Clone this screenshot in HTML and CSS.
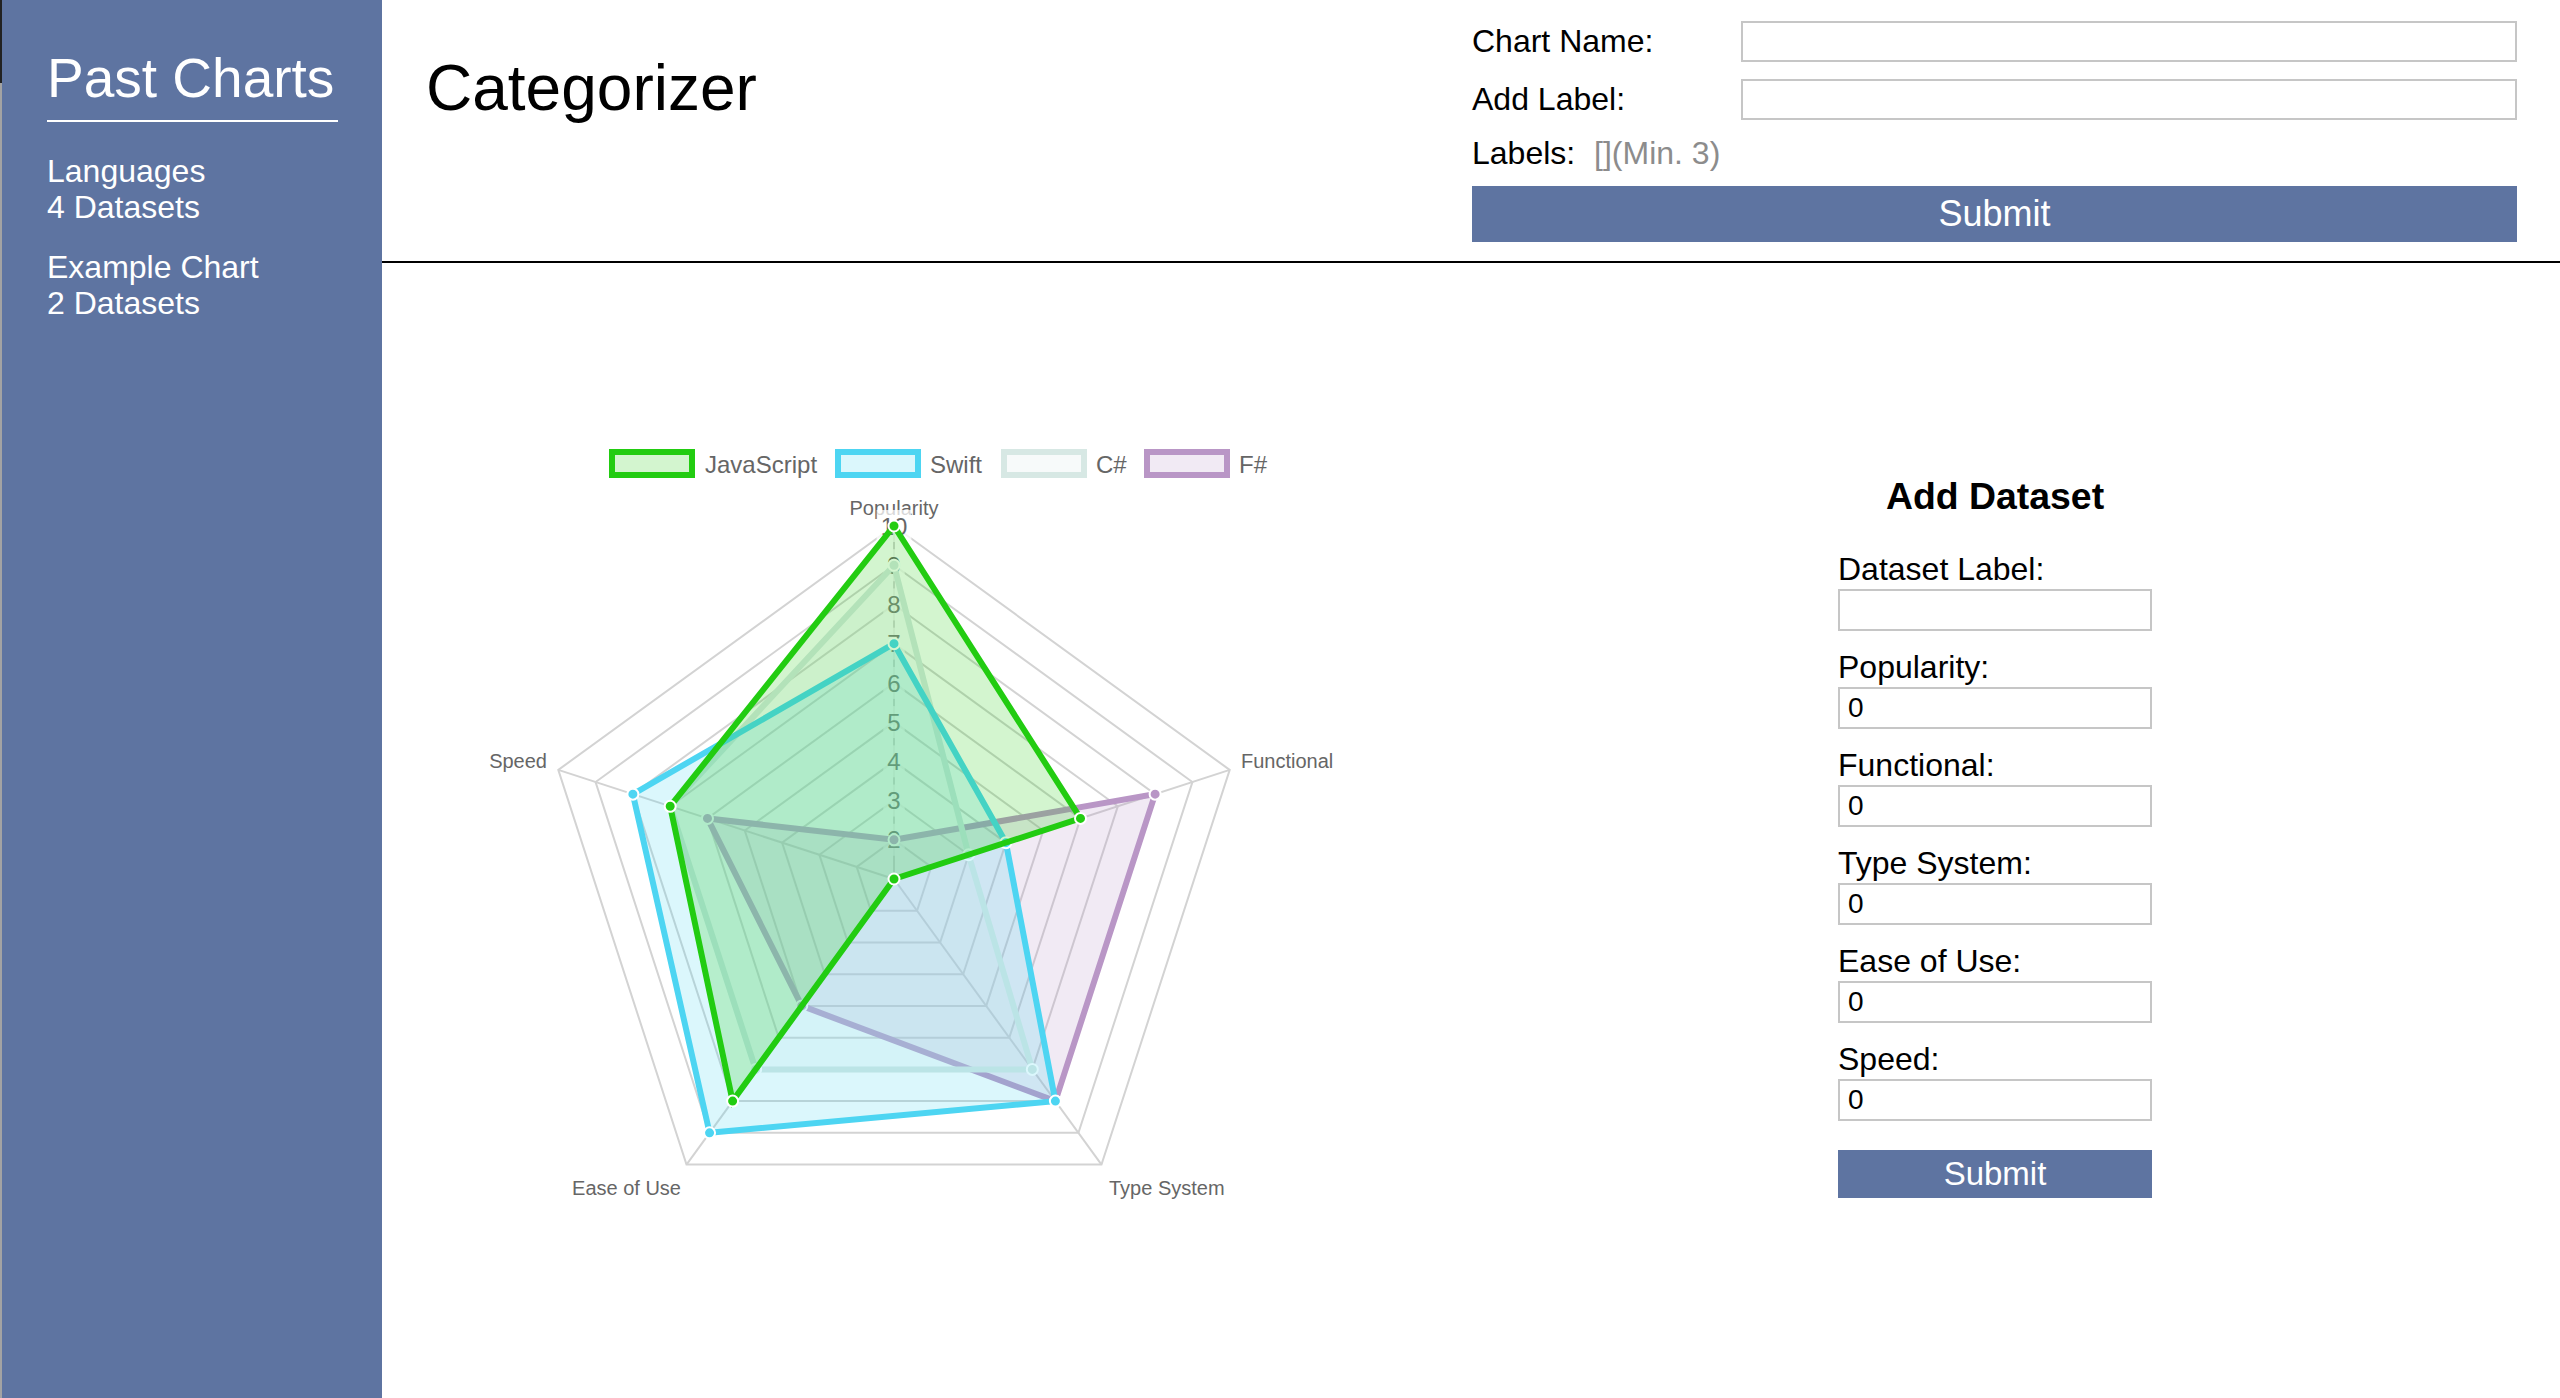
FILE: index.html
```html
<!DOCTYPE html>
<html lang="en">
<head>
<meta charset="utf-8">
<title>Categorizer</title>
<link rel="stylesheet" href="styles.css">
</head>
<body>
<div class="app">
  <aside class="sidebar">
    <h2 class="sidebar-title">Past Charts</h2>
    <ul class="chart-list">
      <li class="chart-item"><div>Languages</div><div>4 Datasets</div></li>
      <li class="chart-item"><div>Example Chart</div><div>2 Datasets</div></li>
    </ul>
  </aside>
  <main class="main">
    <header class="header">
      <h1 class="title">Categorizer</h1>
      <form class="new-chart">
        <label class="field-label">Chart Name:</label>
        <input class="text-input" type="text">
        <label class="field-label">Add Label:</label>
        <input class="text-input" type="text">
        <div class="labels-row">Labels: <span class="labels-hint">[](Min. 3)</span></div>
        <button class="btn btn-wide" type="button">Submit</button>
      </form>
    </header>
    <section class="content">
      <svg class="radar" viewBox="460 420 900 820" xmlns="http://www.w3.org/2000/svg">
        <!-- legend -->
        <g class="legend">
          <rect x="612" y="452" width="80" height="23" fill="rgba(34,204,17,0.2)" stroke="#22cc11" stroke-width="6"/>
          <text x="705" y="473">JavaScript</text>
          <rect x="838" y="452" width="80" height="23" fill="rgba(77,213,242,0.2)" stroke="#4dd5f2" stroke-width="6"/>
          <text x="930" y="473">Swift</text>
          <rect x="1004" y="452" width="80" height="23" fill="rgba(215,232,228,0.2)" stroke="#d7e8e4" stroke-width="6"/>
          <text x="1096" y="473">C#</text>
          <rect x="1147" y="452" width="80" height="23" fill="rgba(185,150,198,0.2)" stroke="#b996c6" stroke-width="6"/>
          <text x="1239" y="473">F#</text>
        </g>
        <!-- point labels -->
        <g class="point-labels">
          <text x="894" y="515" text-anchor="middle">Popularity</text>
          <text x="1241" y="768">Functional</text>
          <text x="1109" y="1195">Type System</text>
          <text x="681" y="1195" text-anchor="end">Ease of Use</text>
          <text x="547" y="768" text-anchor="end">Speed</text>
        </g>
        <g transform="translate(894 879)">
          <!-- grid rings -->
          <g fill="none" stroke="#d3d3d3" stroke-width="2">
            <polygon points="0,-39.22 37.30,-12.12 23.05,31.73 -23.05,31.73 -37.30,-12.12"/>
            <polygon points="0,-78.44 74.60,-24.24 46.11,63.46 -46.11,63.46 -74.60,-24.24"/>
            <polygon points="0,-117.67 111.91,-36.36 69.16,95.19 -69.16,95.19 -111.91,-36.36"/>
            <polygon points="0,-156.89 149.21,-48.48 92.22,126.93 -92.22,126.93 -149.21,-48.48"/>
            <polygon points="0,-196.11 186.51,-60.60 115.27,158.66 -115.27,158.66 -186.51,-60.60"/>
            <polygon points="0,-235.33 223.81,-72.72 138.32,190.39 -138.32,190.39 -223.81,-72.72"/>
            <polygon points="0,-274.56 261.12,-84.84 161.38,222.12 -161.38,222.12 -261.12,-84.84"/>
            <polygon points="0,-313.78 298.42,-96.96 184.44,253.85 -184.44,253.85 -298.42,-96.96"/>
            <polygon points="0,-353 335.72,-109.08 207.49,285.58 -207.49,285.58 -335.72,-109.08"/>
            <line x1="0" y1="0" x2="0" y2="-353"/>
            <line x1="0" y1="0" x2="335.72" y2="-109.08"/>
            <line x1="0" y1="0" x2="207.49" y2="285.58"/>
            <line x1="0" y1="0" x2="-207.49" y2="285.58"/>
            <line x1="0" y1="0" x2="-335.72" y2="-109.08"/>
          </g>
          <!-- tick labels -->
          <g class="ticks">
            <rect x="-10.7" y="-55.22" width="21.4" height="32"/><text x="0" y="-30.6">2</text>
            <rect x="-10.7" y="-94.44" width="21.4" height="32"/><text x="0" y="-69.8">3</text>
            <rect x="-10.7" y="-133.67" width="21.4" height="32"/><text x="0" y="-109.1">4</text>
            <rect x="-10.7" y="-172.89" width="21.4" height="32"/><text x="0" y="-148.3">5</text>
            <rect x="-10.7" y="-212.11" width="21.4" height="32"/><text x="0" y="-187.5">6</text>
            <rect x="-10.7" y="-251.33" width="21.4" height="32"/><text x="0" y="-226.7">7</text>
            <rect x="-10.7" y="-290.56" width="21.4" height="32"/><text x="0" y="-266">8</text>
            <rect x="-10.7" y="-329.78" width="21.4" height="32"/><text x="0" y="-305.2">9</text>
            <rect x="-17.4" y="-369" width="34.8" height="32"/><text x="0" y="-344.4">10</text>
          </g>
          <!-- F# -->
          <g>
            <polygon points="0,-39.22 261.12,-84.84 161.38,222.12 -92.22,126.93 -186.51,-60.60" fill="rgba(185,150,198,0.2)" stroke="#b996c6" stroke-width="6" stroke-linejoin="miter"/>
            <g fill="#b996c6" stroke="#fff" stroke-width="2">
              <circle cx="0" cy="-39.22" r="5.5"/><circle cx="261.12" cy="-84.84" r="5.5"/><circle cx="161.38" cy="222.12" r="5.5"/><circle cx="-92.22" cy="126.93" r="5.5"/><circle cx="-186.51" cy="-60.60" r="5.5"/>
            </g>
          </g>
          <!-- C# -->
          <g>
            <polygon points="0,-313.78 74.60,-24.24 138.32,190.39 -138.32,190.39 -223.81,-72.72" fill="rgba(215,232,228,0.2)" stroke="#d7e8e4" stroke-width="6" stroke-linejoin="miter"/>
            <g fill="#d7e8e4" stroke="#fff" stroke-width="2">
              <circle cx="0" cy="-313.78" r="5.5"/><circle cx="74.60" cy="-24.24" r="5.5"/><circle cx="138.32" cy="190.39" r="5.5"/><circle cx="-138.32" cy="190.39" r="5.5"/><circle cx="-223.81" cy="-72.72" r="5.5"/>
            </g>
          </g>
          <!-- Swift -->
          <g>
            <polygon points="0,-235.33 111.91,-36.36 161.38,222.12 -184.44,253.85 -261.12,-84.84" fill="rgba(77,213,242,0.2)" stroke="#4dd5f2" stroke-width="6" stroke-linejoin="miter"/>
            <g fill="#4dd5f2" stroke="#fff" stroke-width="2">
              <circle cx="0" cy="-235.33" r="5.5"/><circle cx="111.91" cy="-36.36" r="5.5"/><circle cx="161.38" cy="222.12" r="5.5"/><circle cx="-184.44" cy="253.85" r="5.5"/><circle cx="-261.12" cy="-84.84" r="5.5"/>
            </g>
          </g>
          <!-- JavaScript -->
          <g>
            <polygon points="0,-353 186.51,-60.60 0,0 -161.38,222.12 -223.81,-72.72" fill="rgba(34,204,17,0.2)" stroke="#22cc11" stroke-width="6" stroke-linejoin="miter"/>
            <g fill="#22cc11" stroke="#fff" stroke-width="2">
              <circle cx="0" cy="-353" r="5.5"/><circle cx="186.51" cy="-60.60" r="5.5"/><circle cx="0" cy="0" r="5.5"/><circle cx="-161.38" cy="222.12" r="5.5"/><circle cx="-223.81" cy="-72.72" r="5.5"/>
            </g>
          </g>
        </g>
      </svg>
      <form class="dataset-form">
        <h3 class="form-heading">Add Dataset</h3>
        <div class="field"><label class="field-name">Dataset Label:</label><input class="text-input small" type="text"></div>
        <div class="field"><label class="field-name">Popularity:</label><input class="text-input small" type="text" value="0"></div>
        <div class="field"><label class="field-name">Functional:</label><input class="text-input small" type="text" value="0"></div>
        <div class="field"><label class="field-name">Type System:</label><input class="text-input small" type="text" value="0"></div>
        <div class="field"><label class="field-name">Ease of Use:</label><input class="text-input small" type="text" value="0"></div>
        <div class="field"><label class="field-name">Speed:</label><input class="text-input small" type="text" value="0"></div>
        <button class="btn btn-small" type="button">Submit</button>
      </form>
    </section>
  </main>
</div>
</body>
</html>
```
FILE: styles.css
```css
* {
  box-sizing: border-box;
}

html,
body {
  margin: 0;
  padding: 0;
}

body {
  font-family: "Liberation Sans", Arial, sans-serif;
  color: #000;
  background: #fff;
}

.app {
  display: flex;
  height: 1398px;
  overflow: hidden;
}

/* Sidebar */
.sidebar {
  width: 382px;
  flex: none;
  padding-left: 47px;
  color: #fff;
  background:
    linear-gradient(#222 0 83px, #a3a3a3 83px) left top / 2px 100% no-repeat,
    #5e74a1;
}

.sidebar-title {
  margin: 46px 0 0;
  width: 291px;
  padding-bottom: 10px;
  border-bottom: 2px solid #fff;
  font-size: 55px;
  font-weight: normal;
  line-height: 64px;
  white-space: nowrap;
}

.chart-list {
  list-style: none;
  margin: 31px 0 0;
  padding: 0;
}

.chart-item {
  font-size: 32px;
  line-height: 36px;
  margin-bottom: 24px;
}

/* Main */
.main {
  flex: 1;
  display: flex;
  flex-direction: column;
  min-width: 0;
}

.header {
  height: 263px;
  flex: none;
  border-bottom: 2px solid #000;
  display: flex;
  justify-content: space-between;
  align-items: flex-start;
}

.title {
  margin: 51px 0 0 44px;
  font-size: 64px;
  font-weight: normal;
  line-height: 74px;
}

.new-chart {
  width: 1045px;
  margin: 21px 43px 0 0;
  display: grid;
  grid-template-columns: 269px 1fr;
  row-gap: 17px;
  align-items: center;
  font-size: 32px;
}

.field-label {
  line-height: 41px;
}

.text-input {
  display: block;
  width: 100%;
  height: 41px;
  margin: 0;
  padding: 0 8px;
  border: 2px solid #c6c6c6;
  background: #fff;
  font-family: "Liberation Sans", Arial, sans-serif;
  font-size: 28px;
  color: #000;
  outline: none;
}

.labels-row {
  grid-column: 1 / -1;
  height: 32px;
  line-height: 32px;
}

.labels-hint {
  color: #8c8c8c;
  margin-left: 10px;
}

.btn {
  display: block;
  border: 0;
  padding: 0;
  margin: 0;
  background: #5e74a1;
  color: #fff;
  font-family: "Liberation Sans", Arial, sans-serif;
  cursor: pointer;
}

.btn-wide {
  grid-column: 1 / -1;
  height: 56px;
  font-size: 36px;
}

/* Content */
.content {
  flex: 1;
  display: flex;
  align-items: flex-start;
  padding: 157px 0 0 78px;
}

.radar {
  display: block;
  flex: none;
  width: 900px;
  height: 820px;
}

.radar text {
  font-family: "Liberation Sans", Arial, sans-serif;
  fill: #666;
}

.legend text {
  font-size: 24px;
}

.point-labels text {
  font-size: 20px;
}

.ticks rect {
  fill: rgba(255, 255, 255, 0.75);
}

.ticks text {
  font-size: 24px;
  text-anchor: middle;
}

.dataset-form {
  width: 314px;
  flex: none;
  margin: 54px 0 0 478px;
  display: flex;
  flex-direction: column;
}

.form-heading {
  margin: 0 0 33px;
  font-size: 37.4px;
  font-weight: bold;
  line-height: 44px;
  text-align: center;
}

.field {
  display: flex;
  flex-direction: column;
  margin-bottom: 18px;
}

.field-name {
  font-size: 32px;
  line-height: 36px;
}

.text-input.small {
  height: 42px;
  margin-top: 2px;
}

.btn-small {
  width: 100%;
  height: 48px;
  margin-top: 11px;
  font-size: 33px;
}
```
